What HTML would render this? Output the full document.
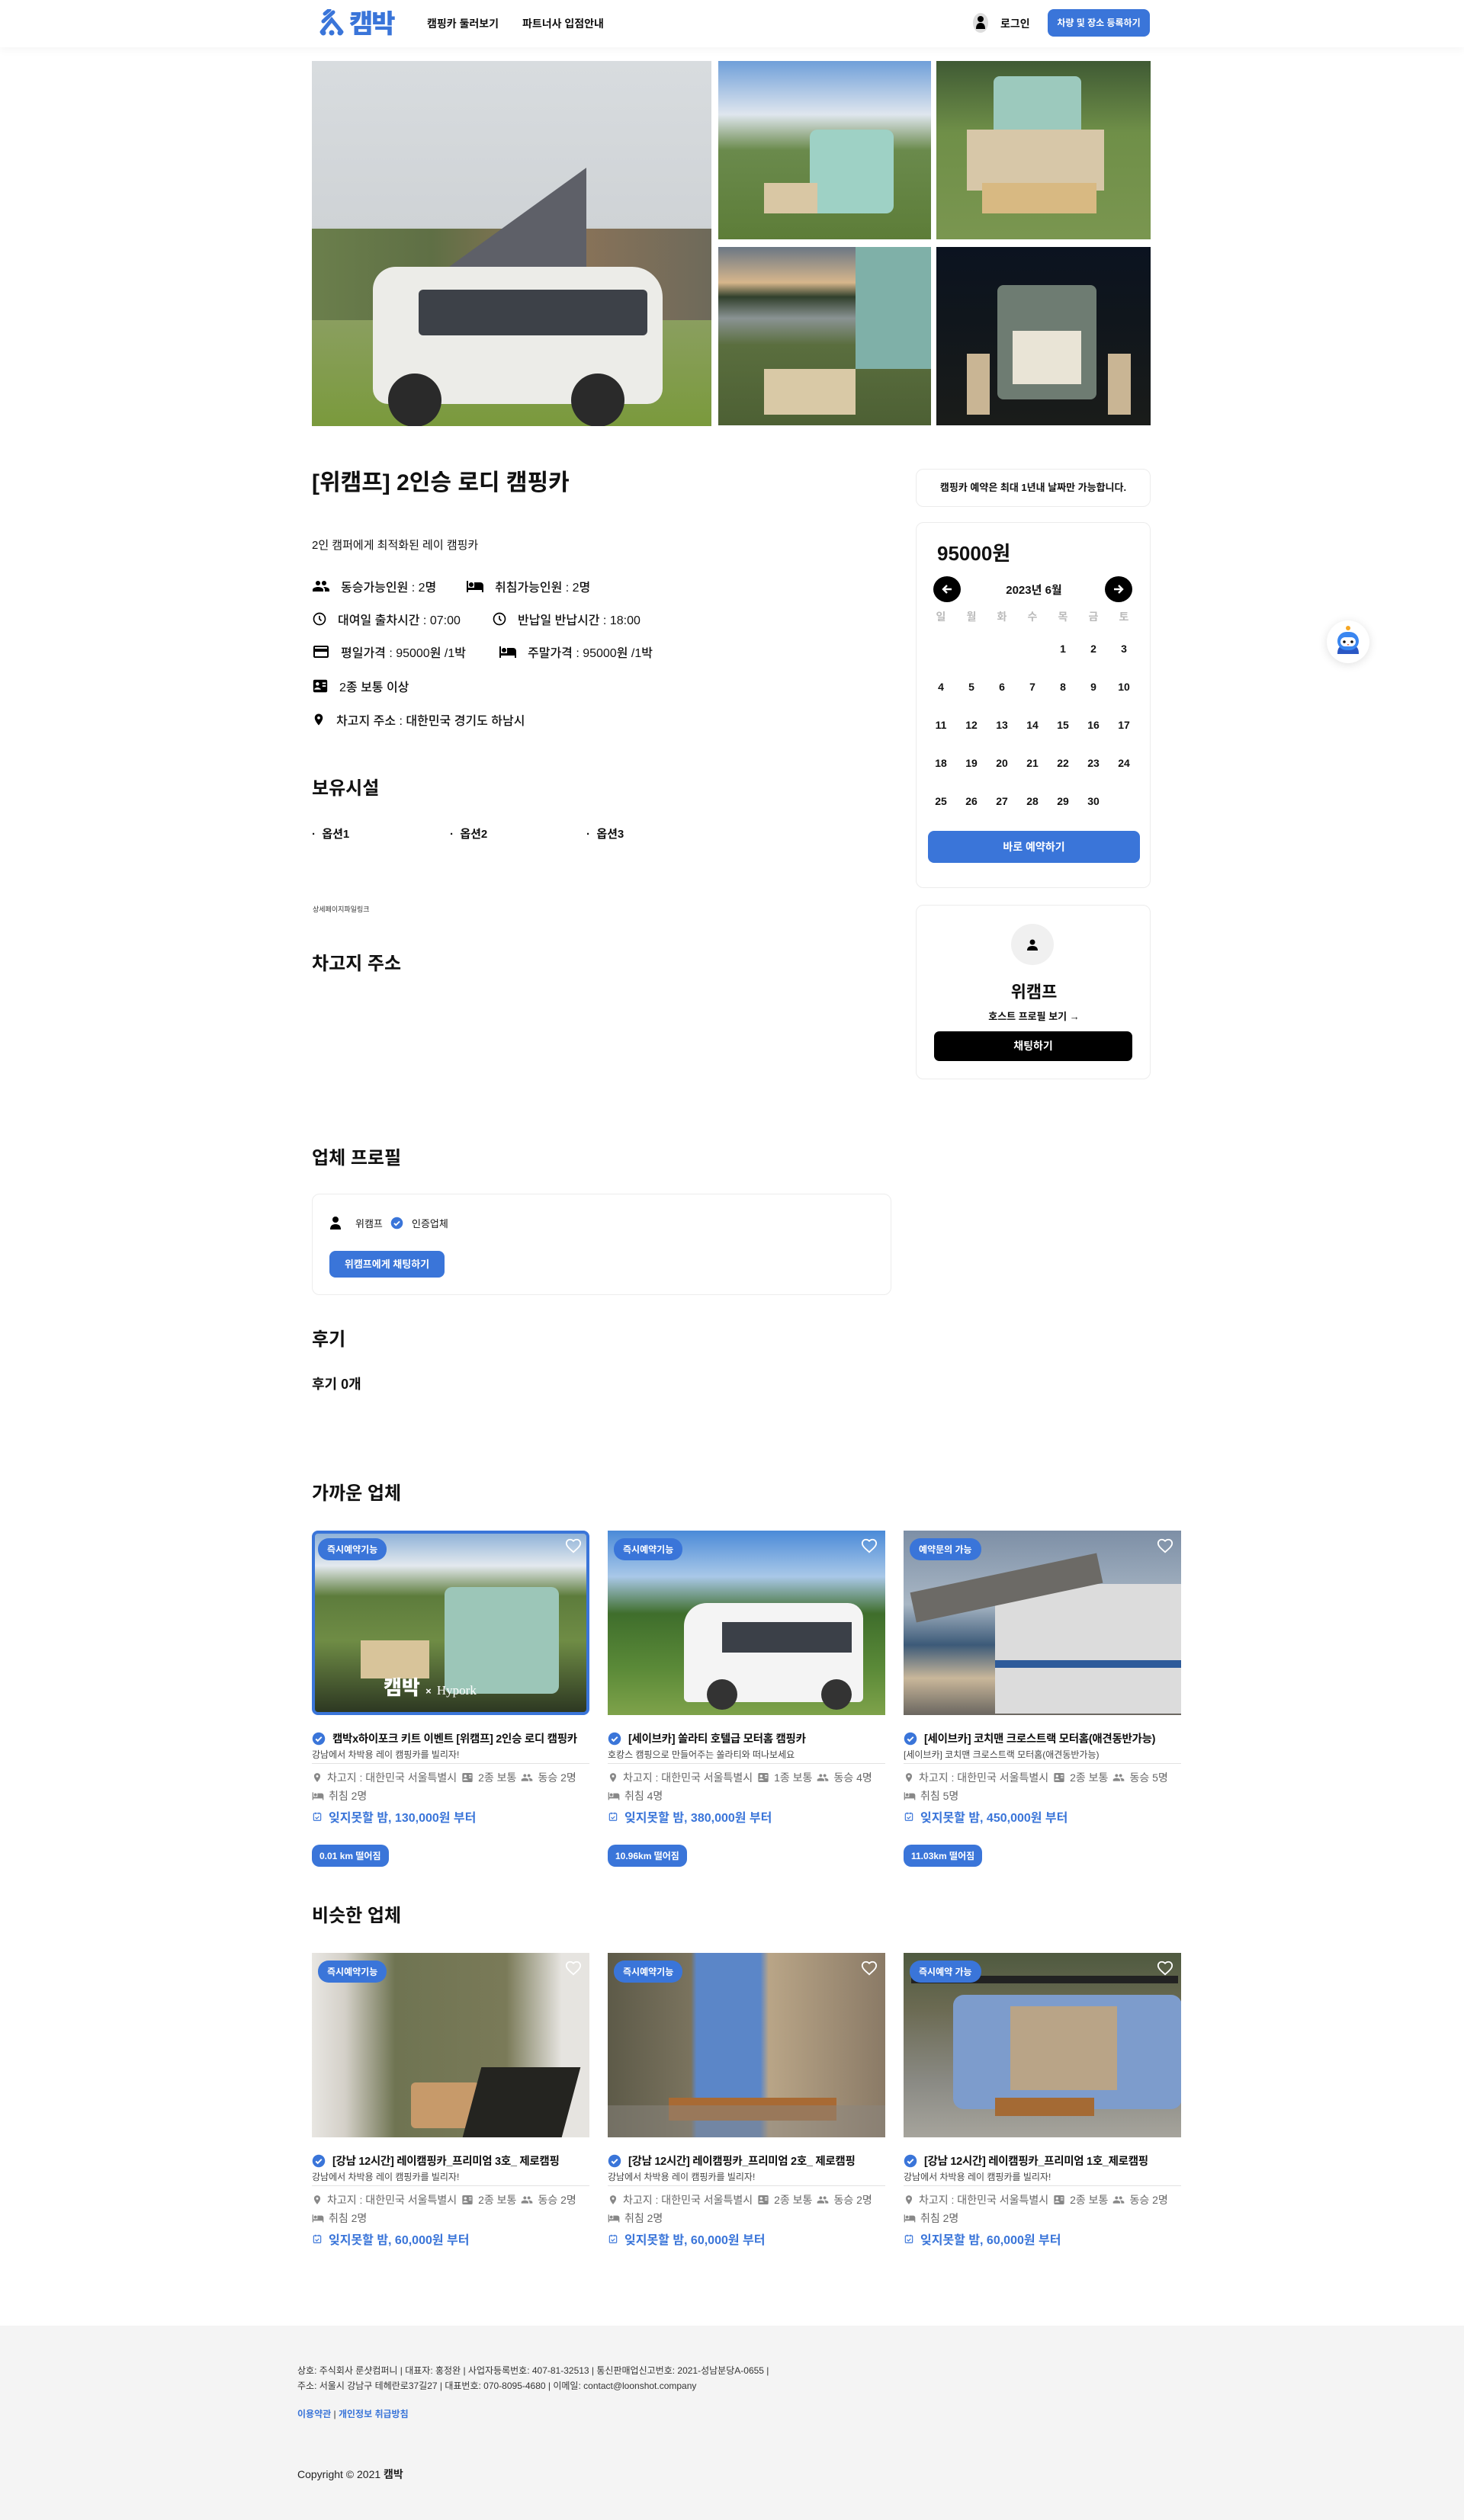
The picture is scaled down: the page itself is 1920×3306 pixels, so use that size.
<!DOCTYPE html>
<html><head><meta charset="utf-8">
<style>
*{margin:0;padding:0;box-sizing:border-box}
body{width:1920px;height:3306px;position:relative;background:#fff;font-family:"Liberation Sans","Noto Sans CJK KR",sans-serif;color:#111;overflow:hidden}
.a{position:absolute;white-space:nowrap}
.hdr{position:absolute;left:0;top:0;width:1920px;height:62px;background:#fff;box-shadow:0 4px 10px rgba(0,0,0,.04)}
.ph{position:absolute;overflow:hidden}
.h2{font-size:24px;font-weight:700}
.info{font-size:16px;font-weight:500;display:flex;align-items:center;gap:14px}
.box{position:absolute;border:1px solid #ececec;border-radius:10px;background:#fff}
.cal td{width:40px;height:50px;text-align:center;font-size:14px;font-weight:600}
.card{position:absolute;width:364px}
.cimg{position:absolute;left:0;top:0;width:364px;height:242px;overflow:hidden}
.badge{position:absolute;left:8px;top:10px;background:#3a75d9;color:#fff;font-size:12px;font-weight:700;padding:6px 12px;border-radius:14px}
.heart{position:absolute;right:10px;top:9px}
.ct{position:absolute;top:262px;left:0;font-size:14.5px;font-weight:600;display:flex;align-items:center;gap:9px;white-space:nowrap;letter-spacing:-0.3px}
.cs{position:absolute;top:285px;left:0;font-size:12px;color:#444;white-space:nowrap}
.cl{position:absolute;top:305px;left:0;width:364px;height:1px;background:#e2e2e2}
.ci{position:absolute;left:0;font-size:14px;color:#666;white-space:nowrap;display:flex;align-items:center;gap:6px}
.cp{position:absolute;left:0;font-size:16px;font-weight:700;color:#3a75d9;white-space:nowrap;display:flex;align-items:center;gap:8px}
.km{position:absolute;top:412px;left:0;background:#3a75d9;color:#fff;font-size:12px;font-weight:700;padding:6px 10px;border-radius:10px}
</style></head><body>

<div class="hdr"></div>
<svg class="a" style="left:418px;top:12px" width="34" height="36" viewBox="0 0 34 36"><path d="M8 6 L14 1 M6 16 L19 4 M4 30 L17 14 L30 30" stroke="#3a75d9" stroke-width="5" fill="none" stroke-linecap="round"/><circle cx="6" cy="31" r="3.5" fill="#3a75d9"/><circle cx="17" cy="31" r="3.5" fill="#3a75d9"/><circle cx="28" cy="31" r="3.5" fill="#3a75d9"/></svg>
<div class="a" style="left:458px;top:4px;font-size:34px;font-weight:900;color:#3a75d9;letter-spacing:-2px">캠박</div>
<div class="a" style="left:560px;top:21px;font-size:14px;font-weight:600">캠핑카 둘러보기</div>
<div class="a" style="left:685px;top:21px;font-size:14px;font-weight:600">파트너사 입점안내</div>
<div class="a" style="left:1276px;top:17px;width:20px;height:26px;border-radius:50%;background:#ddd"></div>
<svg class="a" style="left:1279px;top:19px" width="14" height="20" viewBox="0 0 14 20"><circle cx="7" cy="6" r="4"/><path d="M1 19 Q1 11 7 11 Q13 11 13 19Z"/></svg>
<div class="a" style="left:1312px;top:21px;font-size:14px;font-weight:600">로그인</div>
<div class="a" style="left:1374px;top:12px;width:134px;height:36px;border-radius:8px;background:#3a75d9;color:#fff;font-size:12px;font-weight:700;text-align:center;line-height:36px">차량 및 장소 등록하기</div>

<!-- photos -->
<div class="ph" style="left:409px;top:80px;width:524px;height:479px;background:linear-gradient(#d8dcdf 0%,#cfd3d6 45%,#8fa06a 62%,#7a9a3c 100%)">
 <div class="a" style="left:0;top:220px;width:524px;height:120px;background:linear-gradient(90deg,#6b7f4c,#5f6f45 30%,#8e7458 60%,#6e6a5a)"></div>
 <div class="a" style="left:80px;top:270px;width:380px;height:180px;border-radius:30px 40px 20px 20px;background:#ecece8"></div>
 <div class="a" style="left:180px;top:140px;width:180px;height:130px;background:#5e6068;clip-path:polygon(0 100%,100% 0,100% 100%)"></div>
 <div class="a" style="left:140px;top:300px;width:300px;height:60px;background:#3d4148;border-radius:6px"></div>
 <div class="a" style="left:100px;top:410px;width:70px;height:70px;border-radius:50%;background:#2a2a2a"></div>
 <div class="a" style="left:340px;top:410px;width:70px;height:70px;border-radius:50%;background:#2a2a2a"></div>
</div>
<div class="ph" style="left:942px;top:80px;width:279px;height:234px;background:linear-gradient(#6f9fd9 0%,#dfe6ee 30%,#6a8a4c 50%,#5d7d38 100%)">
 <div class="a" style="left:120px;top:90px;width:110px;height:110px;background:#9ed1c5;border-radius:10px"></div>
 <div class="a" style="left:60px;top:160px;width:70px;height:40px;background:#d9c7a4"></div>
</div>
<div class="ph" style="left:1228px;top:80px;width:281px;height:234px;background:linear-gradient(#3f5a34 0%,#6f8f48 40%,#7a9650 100%)">
 <div class="a" style="left:75px;top:20px;width:115px;height:140px;background:#9cc9bd;border-radius:8px"></div>
 <div class="a" style="left:40px;top:90px;width:180px;height:80px;background:#d7c7a8"></div>
 <div class="a" style="left:60px;top:160px;width:150px;height:40px;background:#d8b982"></div>
</div>
<div class="ph" style="left:942px;top:324px;width:279px;height:234px;background:linear-gradient(#6b7784 0%,#d7b68c 20%,#31402c 28%,#8a9393 40%,#5a6e3e 55%,#4d6034 100%)">
 <div class="a" style="left:180px;top:0;width:100px;height:160px;background:#7fb0a8"></div>
 <div class="a" style="left:60px;top:160px;width:120px;height:60px;background:#d9c9a6"></div>
</div>
<div class="ph" style="left:1228px;top:324px;width:281px;height:234px;background:linear-gradient(#0b1320,#10161c 40%,#1a1c1a 100%)">
 <div class="a" style="left:80px;top:50px;width:130px;height:150px;background:#6e7c72;border-radius:8px"></div>
 <div class="a" style="left:100px;top:110px;width:90px;height:70px;background:#e9e4d6"></div>
 <div class="a" style="left:40px;top:140px;width:30px;height:80px;background:#c9b594"></div>
 <div class="a" style="left:225px;top:140px;width:30px;height:80px;background:#c9b594"></div>
</div>

<!-- main info -->
<div class="a" style="left:409px;top:608px;font-size:30px;font-weight:700">[위캠프] 2인승 로디 캠핑카</div>
<div class="a" style="left:409px;top:704px;font-size:15px">2인 캠퍼에게 최적화된 레이 캠핑카</div>

<svg width="0" height="0" style="position:absolute"><defs>
<symbol id="ppl" viewBox="0 0 24 24"><path d="M16 11c1.7 0 3-1.3 3-3s-1.3-3-3-3-3 1.3-3 3 1.3 3 3 3zm-8 0c1.7 0 3-1.3 3-3S9.7 5 8 5 5 6.3 5 8s1.3 3 3 3zm0 2c-2.3 0-7 1.2-7 3.5V19h14v-2.5C15 14.2 10.3 13 8 13zm8 0c-.3 0-.6 0-1 .1 1.2.8 2 2 2 3.4V19h6v-2.5c0-2.3-4.7-3.5-7-3.5z"/></symbol>
<symbol id="bed" viewBox="0 0 24 24"><path d="M7 13c1.7 0 3-1.3 3-3S8.7 7 7 7s-3 1.3-3 3 1.3 3 3 3zm12-6h-8v7H3V5H1v15h2v-3h18v3h2v-9c0-2.2-1.8-4-4-4z"/></symbol>
<symbol id="clk" viewBox="0 0 24 24"><circle cx="12" cy="12" r="9" fill="none" stroke="#000" stroke-width="2"/><path d="M12 7v5l3 3" fill="none" stroke="#000" stroke-width="2"/></symbol>
<symbol id="crd" viewBox="0 0 24 24"><path d="M20 4H4c-1.1 0-2 .9-2 2v12c0 1.1.9 2 2 2h16c1.1 0 2-.9 2-2V6c0-1.1-.9-2-2-2zm0 14H4v-6h16v6zm0-10H4V6h16v2z"/></symbol>
<symbol id="idc" viewBox="0 0 24 24"><path d="M20 3H4C2.9 3 2 3.9 2 5v14c0 1.1.9 2 2 2h16c1.1 0 2-.9 2-2V5c0-1.1-.9-2-2-2zM8 6.5a2.5 2.5 0 1 1 0 5 2.5 2.5 0 0 1 0-5zM13 17H3.5c0-2 3-3 4.5-3s4.5 1 5 3zm7-4h-5v-2h5v2zm0-4h-5V7h5v2z"/></symbol>
<symbol id="pin" viewBox="0 0 24 24"><path d="M12 2C8.1 2 5 5.1 5 9c0 5.2 7 13 7 13s7-7.8 7-13c0-3.9-3.1-7-7-7zm0 9.5a2.5 2.5 0 1 1 0-5 2.5 2.5 0 0 1 0 5z"/></symbol>
<symbol id="chk" viewBox="0 0 24 24"><circle cx="12" cy="12" r="11" fill="#3a75d9"/><path d="M7 12.5l3.3 3.3L17 9" stroke="#fff" stroke-width="2.6" fill="none"/></symbol>
<symbol id="hrt" viewBox="0 0 24 24"><path d="M12 21l-1.4-1.3C5.4 15 2 12 2 8.3 2 5.3 4.4 3 7.3 3c1.7 0 3.4.8 4.7 2.1C13.3 3.8 15 3 16.7 3 19.6 3 22 5.3 22 8.3c0 3.7-3.4 6.7-8.6 11.4z" fill="none" stroke="#fff" stroke-width="2"/></symbol>
<symbol id="cal" viewBox="0 0 24 24"><rect x="4" y="5" width="16" height="16" rx="2" fill="none" stroke="#3a75d9" stroke-width="2"/><path d="M8 3v4M16 3v4M8 14l3 3 5-5" stroke="#3a75d9" stroke-width="2" fill="none"/></symbol>
</defs></svg>

<div class="a info" style="left:409px;top:757px"><svg width="24" height="24"><use href="#ppl"/></svg>동승가능인원 : 2명</div>
<div class="a info" style="left:611px;top:757px"><svg width="24" height="24"><use href="#bed"/></svg>취침가능인원 : 2명</div>
<div class="a info" style="left:409px;top:800px"><svg width="20" height="20"><use href="#clk"/></svg>대여일 출차시간 : 07:00</div>
<div class="a info" style="left:645px;top:800px"><svg width="20" height="20"><use href="#clk"/></svg>반납일 반납시간 : 18:00</div>
<div class="a info" style="left:409px;top:843px"><svg width="24" height="24"><use href="#crd"/></svg>평일가격 : 95000원 /1박</div>
<div class="a info" style="left:654px;top:843px"><svg width="24" height="24"><use href="#bed"/></svg>주말가격 : 95000원 /1박</div>
<div class="a info" style="left:409px;top:888px"><svg width="22" height="22"><use href="#idc"/></svg>2종 보통 이상</div>
<div class="a info" style="left:409px;top:932px"><svg width="18" height="22"><use href="#pin"/></svg>차고지 주소 : 대한민국 경기도 하남시</div>

<div class="a h2" style="left:409px;top:1014px">보유시설</div>
<div class="a" style="left:409px;top:1083px;font-size:15px;font-weight:600">·&nbsp; 옵션1</div>
<div class="a" style="left:590px;top:1083px;font-size:15px;font-weight:600">·&nbsp; 옵션2</div>
<div class="a" style="left:769px;top:1083px;font-size:15px;font-weight:600">·&nbsp; 옵션3</div>
<div class="a" style="left:410px;top:1186px;font-size:9px;color:#333">상세페이지파일링크</div>
<div class="a h2" style="left:409px;top:1244px">차고지 주소</div>

<!-- right column -->
<div class="box" style="left:1201px;top:615px;width:308px;height:50px;font-size:13px;font-weight:600;text-align:center;line-height:48px">캠핑카 예약은 최대 1년내 날짜만 가능합니다.</div>
<div class="box" style="left:1201px;top:685px;width:308px;height:480px">
 <div class="a" style="left:27px;top:20px;font-size:26px;font-weight:700">95000원</div>
 <div class="a" style="left:22px;top:70px;width:36px;height:34px;border-radius:50%;background:#000"></div>
 <svg class="a" style="left:31px;top:78px" width="18" height="18" viewBox="0 0 18 18"><path d="M15 9H4M9 4L4 9l5 5" stroke="#fff" stroke-width="2.4" fill="none"/></svg>
 <div class="a" style="left:247px;top:70px;width:36px;height:34px;border-radius:50%;background:#000"></div>
 <svg class="a" style="left:256px;top:78px" width="18" height="18" viewBox="0 0 18 18"><path d="M3 9h11M9 4l5 5-5 5" stroke="#fff" stroke-width="2.4" fill="none"/></svg>
 <div class="a" style="left:0;width:308px;text-align:center;top:77px;font-size:15px;font-weight:600">2023년 6월</div>
 <table class="cal a" style="left:12px;top:106px;border-collapse:collapse">
  <tr style="color:#bbb"><td style="height:34px">일</td><td style="height:34px">월</td><td style="height:34px">화</td><td style="height:34px">수</td><td style="height:34px">목</td><td style="height:34px">금</td><td style="height:34px">토</td></tr>
  <tr><td></td><td></td><td></td><td></td><td>1</td><td>2</td><td>3</td></tr>
  <tr><td>4</td><td>5</td><td>6</td><td>7</td><td>8</td><td>9</td><td>10</td></tr>
  <tr><td>11</td><td>12</td><td>13</td><td>14</td><td>15</td><td>16</td><td>17</td></tr>
  <tr><td>18</td><td>19</td><td>20</td><td>21</td><td>22</td><td>23</td><td>24</td></tr>
  <tr><td>25</td><td>26</td><td>27</td><td>28</td><td>29</td><td>30</td><td></td></tr>
 </table>
 <div class="a" style="left:15px;top:404px;width:278px;height:42px;border-radius:8px;background:#3a75d9;color:#fff;font-size:14px;font-weight:700;text-align:center;line-height:42px">바로 예약하기</div>
</div>
<div class="box" style="left:1201px;top:1187px;width:308px;height:229px">
 <div class="a" style="left:124px;top:24px;width:56px;height:54px;border-radius:50%;background:#f0f0f0"></div>
 <svg class="a" style="left:144px;top:43px" width="16" height="16" viewBox="0 0 16 16"><circle cx="8" cy="5" r="3.5"/><path d="M1 16Q1 10 8 10Q15 10 15 16Z"/></svg>
 <div class="a" style="left:0;width:308px;text-align:center;top:96px;font-size:22px;font-weight:700">위캠프</div>
 <div class="a" style="left:0;width:308px;text-align:center;top:135px;font-size:13px;font-weight:600">호스트 프로필 보기 →</div>
 <div class="a" style="left:23px;top:165px;width:260px;height:39px;border-radius:7px;background:#000;color:#fff;font-size:14px;font-weight:700;text-align:center;line-height:39px">채팅하기</div>
</div>

<!-- robot -->
<div class="a" style="left:1740px;top:814px;width:56px;height:56px;border-radius:50%;background:#fff;box-shadow:0 2px 12px rgba(0,0,0,.12)"></div>
<svg class="a" style="left:1750px;top:818px" width="36" height="50" viewBox="0 0 36 50"><circle cx="18" cy="6" r="3" fill="#f5a623"/><path d="M4 40 Q4 32 8 30 L28 30 Q32 32 32 40 Z" fill="#2b58c4"/><rect x="4" y="11" width="28" height="24" rx="12" fill="#3a86f0"/><rect x="8" y="18" width="20" height="12" rx="6" fill="#fff"/><circle cx="13" cy="24" r="1.8" fill="#111"/><circle cx="23" cy="24" r="1.8" fill="#111"/><path d="M16.5 27h3l-1.5 2z" fill="#f06030"/></svg>

<!-- business profile -->
<div class="a h2" style="left:409px;top:1499px">업체 프로필</div>
<div class="box" style="left:409px;top:1566px;width:760px;height:133px">
 <svg class="a" style="left:22px;top:28px" width="16" height="18" viewBox="0 0 16 18"><circle cx="8" cy="5" r="4"/><path d="M1 18Q1 11 8 11Q15 11 15 18Z"/></svg>
 <div class="a" style="left:56px;top:28px;font-size:13px">위캠프</div>
 <svg class="a" style="left:102px;top:29px" width="17" height="17"><use href="#chk"/></svg>
 <div class="a" style="left:130px;top:28px;font-size:13px">인증업체</div>
 <div class="a" style="left:22px;top:74px;width:151px;height:35px;border-radius:8px;background:#3a75d9;color:#fff;font-size:13px;font-weight:700;text-align:center;line-height:35px">위캠프에게 채팅하기</div>
</div>
<div class="a h2" style="left:409px;top:1737px">후기</div>
<div class="a" style="left:409px;top:1802px;font-size:18px;font-weight:700">후기 0개</div>
<div class="a h2" style="left:409px;top:1939px">가까운 업체</div>

<!-- nearby cards -->
<div class="card" style="left:409px;top:2008px">
 <div class="cimg" style="border:4px solid #3a75d9;border-radius:8px;background:linear-gradient(#8fb2d8 0%,#e3e9ee 18%,#5d7c3c 35%,#6f8c45 60%,#2d3822 100%)">
  <div class="a" style="left:170px;top:70px;width:150px;height:140px;background:#9cc6b8;border-radius:10px"></div>
  <div class="a" style="left:60px;top:140px;width:90px;height:50px;background:#d8c49a"></div>
  <div class="a" style="left:90px;top:182px;font-size:26px;font-weight:900;color:#fff">캠박 <span style="font-size:13px">×</span> <span style="font-family:'Liberation Serif',serif;font-size:17px;font-weight:400">Hypork</span></div>
 </div>
 <div class="badge">즉시예약기능</div><svg class="heart" width="22" height="22"><use href="#hrt"/></svg>
 <div class="ct"><svg width="18" height="18"><use href="#chk"/></svg>캠박x하이포크 키트 이벤트 [위캠프] 2인승 로디 캠핑카</div>
 <div class="cs">강남에서 차박용 레이 캠핑카를 빌리자!</div><div class="cl"></div>
 <div class="ci" style="top:314px"><svg width="14" height="16"><use href="#pin" fill="#888"/></svg>차고지 : 대한민국 서울특별시 <svg width="16" height="16" fill="#888"><use href="#idc"/></svg>2종 보통 <svg width="16" height="16" fill="#888"><use href="#ppl"/></svg>동승 2명</div>
 <div class="ci" style="top:338px"><svg width="16" height="16" fill="#888"><use href="#bed"/></svg>취침 2명</div>
 <div class="cp" style="top:363px"><svg width="14" height="14"><use href="#cal"/></svg>잊지못할 밤, 130,000원 부터</div>
 <div class="km">0.01 km 떨어짐</div>
</div>
<div class="card" style="left:797px;top:2008px">
 <div class="cimg" style="background:linear-gradient(#4a8ad8 0%,#a9c8e8 25%,#3f6e2c 45%,#5b8a38 75%,#7ea24a 100%)">
  <div class="a" style="left:100px;top:95px;width:235px;height:130px;background:#f4f4f4;border-radius:30px 20px 6px 6px"></div>
  <div class="a" style="left:150px;top:120px;width:170px;height:40px;background:#3b4048"></div>
  <div class="a" style="left:130px;top:195px;width:40px;height:40px;border-radius:50%;background:#333"></div>
  <div class="a" style="left:280px;top:195px;width:40px;height:40px;border-radius:50%;background:#333"></div>
 </div>
 <div class="badge">즉시예약기능</div><svg class="heart" width="22" height="22"><use href="#hrt"/></svg>
 <div class="ct"><svg width="18" height="18"><use href="#chk"/></svg>[세이브카] 쏠라티 호텔급 모터홈 캠핑카</div>
 <div class="cs">호캉스 캠핑으로 만들어주는 쏠라티와 떠나보세요</div><div class="cl"></div>
 <div class="ci" style="top:314px"><svg width="14" height="16"><use href="#pin" fill="#888"/></svg>차고지 : 대한민국 서울특별시 <svg width="16" height="16" fill="#888"><use href="#idc"/></svg>1종 보통 <svg width="16" height="16" fill="#888"><use href="#ppl"/></svg>동승 4명</div>
 <div class="ci" style="top:338px"><svg width="16" height="16" fill="#888"><use href="#bed"/></svg>취침 4명</div>
 <div class="cp" style="top:363px"><svg width="14" height="14"><use href="#cal"/></svg>잊지못할 밤, 380,000원 부터</div>
 <div class="km">10.96km 떨어짐</div>
</div>
<div class="card" style="left:1185px;top:2008px">
 <div class="cimg" style="background:linear-gradient(#7d8fa6 0%,#a8b6c4 40%,#3c5a78 62%,#c9b79a 80%,#6a6660 100%)">
  <div class="a" style="left:120px;top:70px;width:244px;height:170px;background:#dcdcdc;border-radius:20px 0 0 0"></div>
  <div class="a" style="left:10px;top:55px;width:250px;height:40px;background:#6c6a66;transform:rotate(-12deg)"></div>
  <div class="a" style="left:120px;top:170px;width:244px;height:10px;background:#2d5a9a"></div>
 </div>
 <div class="badge">예약문의 가능</div><svg class="heart" width="22" height="22"><use href="#hrt"/></svg>
 <div class="ct"><svg width="18" height="18"><use href="#chk"/></svg>[세이브카] 코치맨 크로스트랙 모터홈(애견동반가능)</div>
 <div class="cs">[세이브카] 코치맨 크로스트랙 모터홈(애견동반가능)</div><div class="cl"></div>
 <div class="ci" style="top:314px"><svg width="14" height="16"><use href="#pin" fill="#888"/></svg>차고지 : 대한민국 서울특별시 <svg width="16" height="16" fill="#888"><use href="#idc"/></svg>2종 보통 <svg width="16" height="16" fill="#888"><use href="#ppl"/></svg>동승 5명</div>
 <div class="ci" style="top:338px"><svg width="16" height="16" fill="#888"><use href="#bed"/></svg>취침 5명</div>
 <div class="cp" style="top:363px"><svg width="14" height="14"><use href="#cal"/></svg>잊지못할 밤, 450,000원 부터</div>
 <div class="km">11.03km 떨어짐</div>
</div>

<div class="a h2" style="left:409px;top:2493px">비슷한 업체</div>

<div class="card" style="left:409px;top:2562px">
 <div class="cimg" style="background:linear-gradient(90deg,#e8e6e2 0%,#d4d0c8 12%,#6f7452 30%,#7a7a58 70%,#e6e4e0 90%)">
  <div class="a" style="left:130px;top:170px;width:90px;height:60px;background:#c79a6a;border-radius:6px"></div>
  <div class="a" style="left:210px;top:150px;width:130px;height:92px;background:#242420;transform:skewX(-15deg)"></div>
 </div>
 <div class="badge">즉시예약기능</div><svg class="heart" width="22" height="22"><use href="#hrt"/></svg>
 <div class="ct"><svg width="18" height="18"><use href="#chk"/></svg>[강남 12시간] 레이캠핑카_프리미엄 3호_ 제로캠핑</div>
 <div class="cs">강남에서 차박용 레이 캠핑카를 빌리자!</div><div class="cl"></div>
 <div class="ci" style="top:314px"><svg width="14" height="16"><use href="#pin" fill="#888"/></svg>차고지 : 대한민국 서울특별시 <svg width="16" height="16" fill="#888"><use href="#idc"/></svg>2종 보통 <svg width="16" height="16" fill="#888"><use href="#ppl"/></svg>동승 2명</div>
 <div class="ci" style="top:338px"><svg width="16" height="16" fill="#888"><use href="#bed"/></svg>취침 2명</div>
 <div class="cp" style="top:363px"><svg width="14" height="14"><use href="#cal"/></svg>잊지못할 밤, 60,000원 부터</div>
</div>
<div class="card" style="left:797px;top:2562px">
 <div class="cimg" style="background:linear-gradient(90deg,#5d5a48 0%,#7a735e 30%,#5b86c8 32%,#5b86c8 55%,#b9a587 58%,#8a7a66 100%)">
  <div class="a" style="left:80px;top:190px;width:220px;height:30px;background:#a86a34"></div>
  <div class="a" style="left:0;top:200px;width:364px;height:42px;background:#8a8680;opacity:.5"></div>
 </div>
 <div class="badge">즉시예약기능</div><svg class="heart" width="22" height="22"><use href="#hrt"/></svg>
 <div class="ct"><svg width="18" height="18"><use href="#chk"/></svg>[강남 12시간] 레이캠핑카_프리미엄 2호_ 제로캠핑</div>
 <div class="cs">강남에서 차박용 레이 캠핑카를 빌리자!</div><div class="cl"></div>
 <div class="ci" style="top:314px"><svg width="14" height="16"><use href="#pin" fill="#888"/></svg>차고지 : 대한민국 서울특별시 <svg width="16" height="16" fill="#888"><use href="#idc"/></svg>2종 보통 <svg width="16" height="16" fill="#888"><use href="#ppl"/></svg>동승 2명</div>
 <div class="ci" style="top:338px"><svg width="16" height="16" fill="#888"><use href="#bed"/></svg>취침 2명</div>
 <div class="cp" style="top:363px"><svg width="14" height="14"><use href="#cal"/></svg>잊지못할 밤, 60,000원 부터</div>
</div>
<div class="card" style="left:1185px;top:2562px">
 <div class="cimg" style="background:linear-gradient(#4f5a40 0%,#6b6a52 30%,#8a8a84 70%,#a6a49c 100%)">
  <div class="a" style="left:10px;top:30px;width:350px;height:10px;background:#222"></div>
  <div class="a" style="left:65px;top:55px;width:300px;height:150px;background:#7d9ccc;border-radius:14px"></div>
  <div class="a" style="left:140px;top:70px;width:140px;height:110px;background:#b9a487"></div>
  <div class="a" style="left:120px;top:190px;width:130px;height:24px;background:#a46a34"></div>
 </div>
 <div class="badge">즉시예약 가능</div><svg class="heart" width="22" height="22"><use href="#hrt"/></svg>
 <div class="ct"><svg width="18" height="18"><use href="#chk"/></svg>[강남 12시간] 레이캠핑카_프리미엄 1호_제로캠핑</div>
 <div class="cs">강남에서 차박용 레이 캠핑카를 빌리자!</div><div class="cl"></div>
 <div class="ci" style="top:314px"><svg width="14" height="16"><use href="#pin" fill="#888"/></svg>차고지 : 대한민국 서울특별시 <svg width="16" height="16" fill="#888"><use href="#idc"/></svg>2종 보통 <svg width="16" height="16" fill="#888"><use href="#ppl"/></svg>동승 2명</div>
 <div class="ci" style="top:338px"><svg width="16" height="16" fill="#888"><use href="#bed"/></svg>취침 2명</div>
 <div class="cp" style="top:363px"><svg width="14" height="14"><use href="#cal"/></svg>잊지못할 밤, 60,000원 부터</div>
</div>

<!-- footer -->
<div class="a" style="left:0;top:3051px;width:1920px;height:255px;background:#f4f4f4"></div>
<div class="a" style="left:390px;top:3100px;font-size:12px;color:#333;line-height:20px">상호: 주식회사 룬샷컴퍼니 | 대표자: 홍정완 | 사업자등록번호: 407-81-32513 | 통신판매업신고번호: 2021-성남분당A-0655 |<br>주소: 서울시 강남구 테헤란로37길27 | 대표번호: 070-8095-4680 | 이메일: contact@loonshot.company</div>
<div class="a" style="left:390px;top:3158px;font-size:12px;font-weight:700;color:#3a75d9">이용약관 <span style="color:#333;font-weight:400">|</span> 개인정보 취급방침</div>
<div class="a" style="left:390px;top:3236px;font-size:14px;color:#222">Copyright © 2021 <b>캠박</b></div>
</body></html>
